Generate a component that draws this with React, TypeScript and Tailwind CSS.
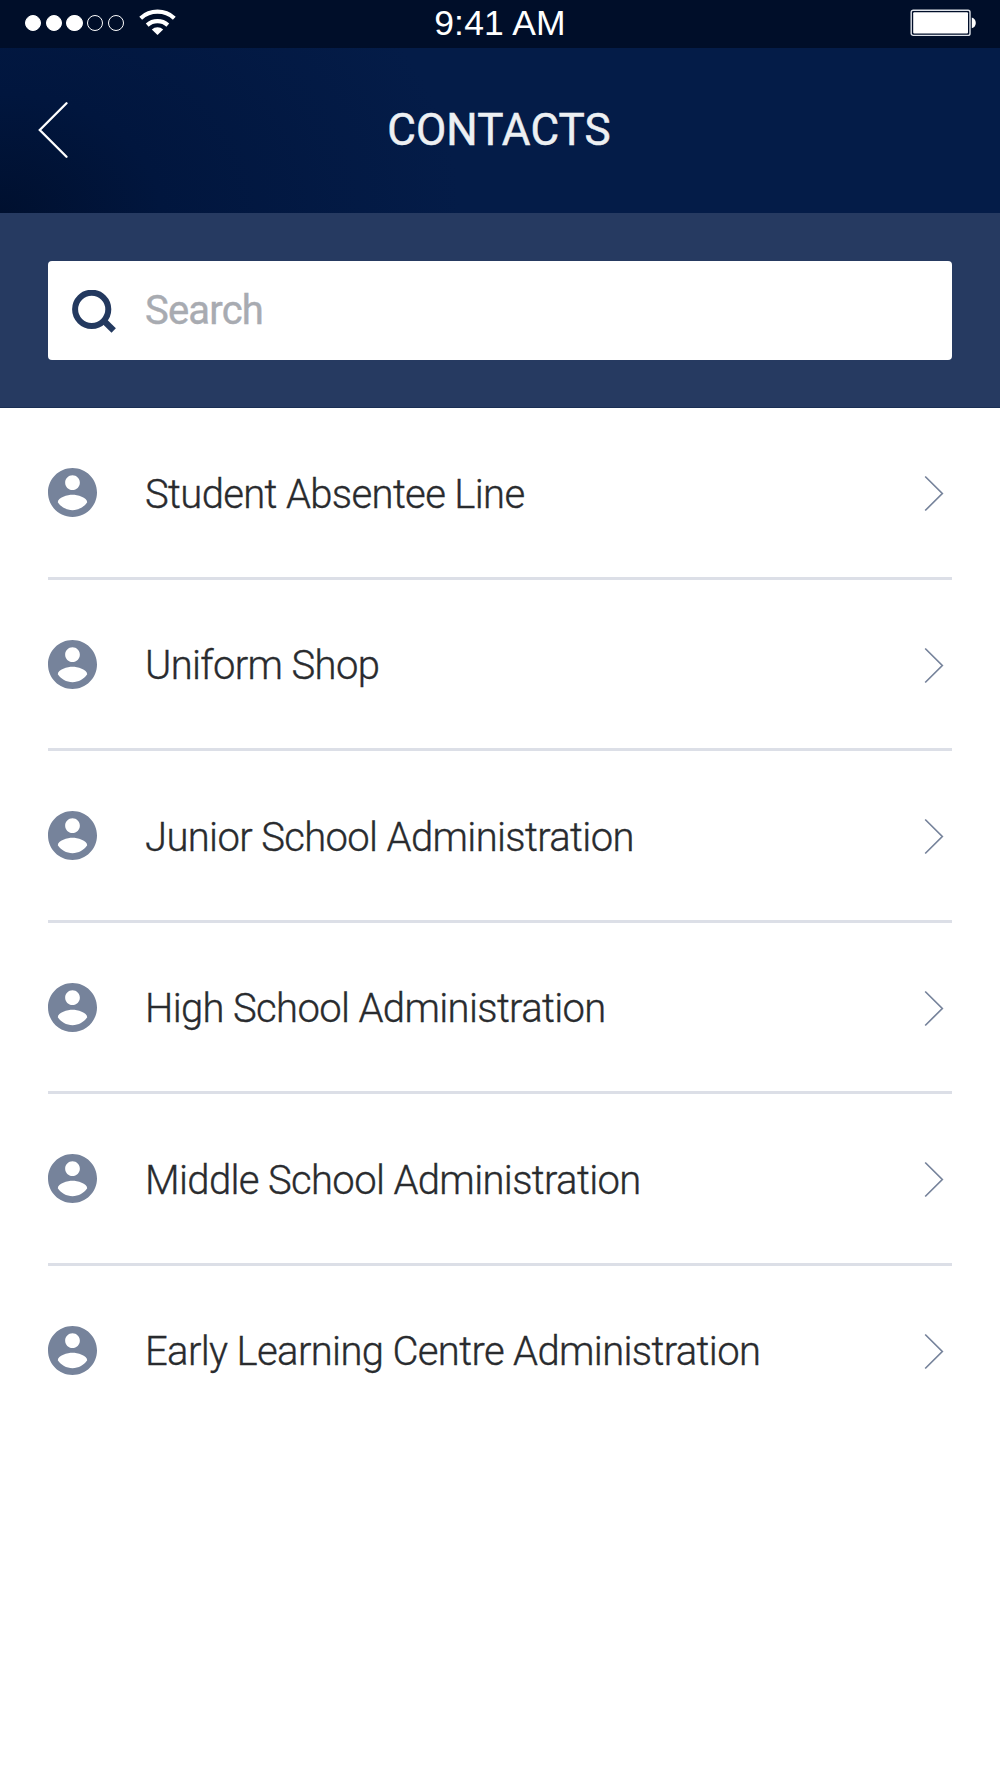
const contacts = [
  'Student Absentee Line',
  'Uniform Shop',
  'Junior School Administration',
  'High School Administration',
  'Middle School Administration',
  'Early Learning Centre Administration',
]

const signal = [true, true, true, false, false]

function StatusBar() {
  return (
    <div className="relative flex h-12 items-center justify-between bg-[#000e29] pb-[2px] pl-[25px] pr-6 text-white">
      <div className="flex items-center">
        <div className="flex gap-[4.5px]">
          {signal.map((filled, i) => (
            <span
              key={i}
              className={`size-[16.2px] rounded-full border-[1.3px] border-white ${filled ? 'bg-white' : ''}`}
            />
          ))}
        </div>
        <svg className="ml-[15px] mt-[-2px] h-[26px] w-[37px]" viewBox="0 0 37 26" fill="none">
          <path d="M1.7 9.2a25 25 0 0 1 33.6 0" stroke="currentColor" strokeWidth="4.2" />
          <path d="M8.2 16.1a15.5 15.5 0 0 1 20.6 0" stroke="currentColor" strokeWidth="4.2" />
          <path d="M12.8 20.4a8.8 8.8 0 0 1 11.4 0L18.5 26z" fill="currentColor" />
        </svg>
      </div>
      <div className="absolute inset-x-0 top-0 text-center font-['Liberation_Sans',sans-serif] text-[35.5px] tracking-[0.2px] leading-[46px]">
        9:41 AM
      </div>
      <svg className="h-[28px] w-[66px]" viewBox="0 0 66 28">
        <rect x="1.2" y="1.2" width="58.8" height="25.2" rx="2" fill="none" stroke="#dfe3ea" strokeWidth="1.4" />
        <rect x="3.2" y="3.2" width="54.8" height="21.2" rx="1" fill="#fff" />
        <path d="M61.8 8.5c2.4.8 4 2.8 4 5.4s-1.6 4.6-4 5.4z" fill="#fff" />
      </svg>
    </div>
  )
}

function Header() {
  return (
    <header className="relative flex h-[164.5px] items-center bg-[radial-gradient(ellipse_460px_340px_at_0%_100%,#00102f_0%,#01163e_35%,#041c48_100%)] pl-[38px] text-white">
      <svg className="h-[56px] w-[30px]" viewBox="0 0 30 56" fill="none">
        <path d="M28.5 1.3 1.8 28l26.7 26.7" stroke="currentColor" strokeWidth="2.3" strokeLinecap="round" />
      </svg>
      <h1 className="absolute inset-x-0 pr-[2px] text-center text-[44px] font-normal leading-none tracking-[0.1px] text-[#edf0f3] [-webkit-text-stroke:0.5px_#edf0f3]">
        CONTACTS
      </h1>
    </header>
  )
}

function SearchBar() {
  return (
    <div className="h-[195.5px] border-b border-[#1a2f54] bg-[#263a61] px-12 pt-[48.5px]">
      <div className="flex h-[99px] items-center rounded-[4px] bg-white pl-6">
        <svg className="mt-[2px] h-[43px] w-[44px]" viewBox="0 0 44 43" fill="none" stroke="#23395f">
          <circle cx="19.7" cy="19.3" r="16.6" strokeWidth="6" />
          <path d="M31.5 30.5 41.7 40.5" strokeWidth="6.2" />
        </svg>
        <span className="ml-[29px] text-[40px] leading-none tracking-[-0.8px] text-[#a8abb1] [-webkit-text-stroke:0.4px_#a8abb1]">
          Search
        </span>
      </div>
    </div>
  )
}

function ContactRow({ name, last }: { name: string; last: boolean }) {
  return (
    <li
      className={`mx-12 flex h-[171.5px] items-center border-b-[3px] ${last ? 'border-transparent' : 'border-[#dcdfe7]'}`}
    >
      <svg className="mt-px size-[49px] shrink-0" viewBox="2 2 20 20" fill="#76839b">
        <path d="M12 2C6.48 2 2 6.48 2 12s4.48 10 10 10 10-4.48 10-10S17.52 2 12 2zm0 3c1.66 0 3 1.34 3 3s-1.34 3-3 3-3-1.34-3-3 1.34-3 3-3zm0 14.2c-2.5 0-4.71-1.28-6-3.22.03-1.99 4-3.08 6-3.08 1.99 0 5.97 1.09 6 3.08-1.29 1.94-3.5 3.22-6 3.22z" />
      </svg>
      <span className="ml-12 mt-[5px] flex-1 text-[40px] font-light leading-none tracking-[-0.64px] text-[#292b2e] [-webkit-text-stroke:0.35px_#292b2e]">
        {name}
      </span>
      <svg className="mr-[8.5px] mt-[3px] h-[37px] w-[20px]" viewBox="0 0 20 37" fill="none">
        <path d="M1.2 1.5 18.3 18.5 1.2 35.5" stroke="#76839b" strokeWidth="1.7" />
      </svg>
    </li>
  )
}

export default function App() {
  return (
    <div className="h-[1778px] w-[1000px] overflow-hidden bg-white font-['Roboto',sans-serif]">
      <StatusBar />
      <Header />
      <SearchBar />
      <ul>
        {contacts.map((name, i) => (
          <ContactRow key={name} name={name} last={i === contacts.length - 1} />
        ))}
      </ul>
    </div>
  )
}
